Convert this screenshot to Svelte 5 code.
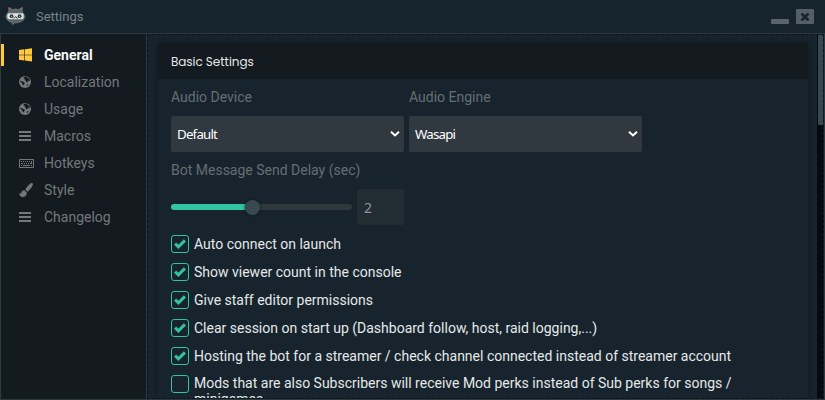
<script>
  const nav = [
    ['General', 'windows'],
    ['Localization', 'globe'],
    ['Usage', 'globe'],
    ['Macros', 'bars'],
    ['Hotkeys', 'keyboard'],
    ['Style', 'brush'],
    ['Changelog', 'bars']
  ];
  const options = [
    ['Auto connect on launch', true],
    ['Show viewer count in the console', true],
    ['Give staff editor permissions', true],
    ['Clear session on start up (Dashboard follow, host, raid logging,...)', true],
    ['Hosting the bot for a streamer / check channel connected instead of streamer account', true],
    ['Mods that are also Subscribers will receive Mod perks instead of Sub perks for songs / minigames', false]
  ];
</script>

{#snippet icon(name)}
  <svg class="icon" width="16" height="14" viewBox="0 0 16 14" fill="currentColor">
    {#if name === 'windows'}
      <path d="M0 2.1 5.4 1.3V6.7H0zM6 1.2 13 .2V6.7H6zM0 7.3H5.4V12.4L0 11.7zM6 7.3H13V13.5L6 12.5z" />
    {:else if name === 'globe'}
      <circle cx="6" cy="7" r="6" />
      <path class="land" d="M4.6 2.3 6.4 1.5 8.6 1.9 8.2 3.2 9.6 3 10.7 4.5 11 6 9.8 5.6 8.9 6.2 8.1 7.6 7 6.8 6.7 5.4 5.4 5 6.1 3.7 4.6 3.4zM1.3 5.8 3.1 6.5 5.2 7.2 5.9 8.2 5 9.3 4.6 10.6 3.5 9.5 3 8 1.4 7zM8 9.4 9.5 8.9 9 10.4 7.8 11.1z" />
    {:else if name === 'bars'}
      <path d="M0 2H12V4H0zM0 6H12V8H0zM0 10H12V12H0z" />
    {:else if name === 'keyboard'}
      <path fill-rule="evenodd" d="M1 3H14Q15 3 15 4V11Q15 12 14 12H1Q0 12 0 11V4Q0 3 1 3zM1 4V11H14V4z" />
      <path d="M2 5h1v1H2zM4 5h1v1H4zM6 5h1v1H6zM8 5h1v1H8zM10 5h1v1h-1zM12 5h1v3h-2V7h1zM2 7h2v1H2zM5 7h1v1H5zM7 7h1v1H7zM9 7h1v1H9zM2 9h1v1H2zM4 9h7v1H4zM12 9h1v1h-1z" />
    {:else}
      <path d="M12.6 0C13.5 0 14.2.7 13.9 1.6 13.2 4 10.7 7.3 8.5 8.7L6.2 6.6C7.4 4.3 10.8.5 12.6 0zM5.4 7.3 7.8 9.5C8 12.5 5.8 14 3.6 14 1.2 14 .2 12.3 0 10 .8 10.6 1.6 11 2.1 10.3 2.6 8.6 3.6 7.3 5.4 7.3z" />
    {/if}
  </svg>
{/snippet}

{#snippet select(value)}
  <div class="select">
    <span>{value}</span>
    <svg width="10" height="6" viewBox="0 0 10 6" fill="none" stroke="#fff" stroke-width="2"><path d="M1 .8 5 4.5 9 .8" /></svg>
  </div>
{/snippet}

<div class="window">
  <header class="titlebar">
    <svg class="logo" width="22" height="20" viewBox="0 0 22 20">
      <path d="M3 6 3.6 1.2 7.5 3Q10.5 2.2 13.5 3L17.4 1.2 18 6Q19.5 7.5 20.5 10.5 19.6 14.5 16 16.3 13 17.6 9.5 17.4L7.3 19.2 6.3 16.9Q1.5 15.5.3 10.5 1.3 7.5 3 6z" fill="#59666b" />
      <path d="M3.8 1 3.6 3.4 6 2.4zM17.2 1 17.4 3.4 15 2.4z" fill="#df5960" />
      <path d="M3.8 7.2H17.2Q18.7 7.2 18.7 8.7V11.5Q18.7 13.3 16.8 13.3H4.2Q2.3 13.3 2.3 11.5V8.7Q2.3 7.2 3.8 7.2z" fill="#dfe4e4" />
      <circle cx="6.6" cy="10.2" r="1.9" fill="#263338" />
      <circle cx="14.6" cy="10.2" r="1.9" fill="#263338" />
      <path d="M6.1 9.7h1.1v1.1H6.1zM14.1 9.7h1.1v1.1h-1.1z" fill="#dfe4e4" />
      <path d="m8.8 12.6 1.8-2 1.8 2" fill="none" stroke="#263338" />
    </svg>
    <span class="title">Settings</span>
    <span class="minimize"></span>
    <span class="close"><svg width="10" height="8" viewBox="0 0 10 8" fill="none" stroke="#17262e" stroke-width="2.6"><path d="m1.5.5 7 7m0-7-7 7" /></svg></span>
  </header>
  <div class="body">
    <nav>
      {#each nav as [label, glyph], i}
        <div class="item" class:active={i === 0}>{@render icon(glyph)}<span>{label}</span></div>
      {/each}
    </nav>
    <main>
      <section>
        <h2>Basic Settings</h2>
        <div class="content">
          <div class="fields">
            <div class="field"><div class="label">Audio Device</div>{@render select('Default')}</div>
            <div class="field"><div class="label">Audio Engine</div>{@render select('Wasapi')}</div>
          </div>
          <div class="label delay">Bot Message Send Delay (sec)</div>
          <div class="slider-row">
            <div class="track"><div class="fill"></div><div class="thumb"></div></div>
            <div class="number">2</div>
          </div>
          {#each options as [label, checked]}
            <div class="option">
              <span class="box">
                {#if checked}<svg width="12" height="10" viewBox="0 0 12 10" fill="none" stroke="#31c3a2" stroke-width="3"><path d="m1.1 4.6 3.3 3.3 6.5-6.5" /></svg>{/if}
              </span>
              <span class="text" class:wrapped={label.length > 90}>{label}</span>
            </div>
          {/each}
        </div>
      </section>
      <div class="scrollbar"><div class="handle"></div></div>
    </main>
  </div>
</div>

<style>
  * { box-sizing: border-box; }
  .window {
    width: 825px; height: 400px; overflow: hidden;
    display: flex; flex-direction: column;
    background: #17242d; color: #e5e8e9;
    font: 14px/20px Roboto, sans-serif;
  }
  .titlebar {
    height: 34px; flex: none; display: flex; align-items: flex-start;
    background: #16252d; border-bottom: 1px solid #2b3940; color: #78838a;
    padding: 0 11px 0 5px;
  }
  .logo { margin-top: 6px; }
  .title { font-size: 13px; margin: 7px auto 0 9px; }
  .minimize { width: 18px; height: 5px; border-radius: 1px; background: #59656b; margin: 19px 7px 0 0; }
  .close {
    width: 18px; height: 15px; border-radius: 1px; background: #536066; margin-top: 9px;
    display: flex; align-items: center; justify-content: center;
  }
  .body { flex: 1; display: flex; min-height: 0; border: 1px solid #2b3940; border-top: 0; }
  nav { width: 146px; flex: none; background: #131a20; border-right: 1px solid #2b3940; padding-top: 7px; }
  .item { height: 27px; display: flex; align-items: center; color: #73787b; padding-left: 18px; }
  .item .icon { flex: none; margin-right: 9px; }
  .land { fill: #131a20; }
  .active { color: #f7f7f7; font-weight: 700; position: relative; }
  .active .icon { color: #ffc83d; }
  .active::before { content: ''; position: absolute; left: 0; top: 3px; width: 3px; height: 22px; background: #ffc83d; }
  main {
    flex: 1; display: flex; min-width: 0; overflow: hidden;
    border: 1px dashed #0d151a; padding-left: 10px;
  }
  section {
    width: 650px; height: 500px; margin-top: 8px; background: #17242d;
    box-shadow: 0 0 4px 1px #0b131880; border-radius: 2px;
  }
  h2 {
    margin: 0; height: 36px; background: #131a20; border-radius: 2px 2px 0 0;
    padding-left: 13px; font: 400 12px/38px Poppins, Inter, sans-serif; letter-spacing: -.05px;
  }
  .content { padding: 8px 13px 0; }
  .fields { display: flex; gap: 5px; }
  .field { width: 233px; }
  .label { height: 20px; color: #666e73; }
  .select {
    height: 36px; margin-top: 9px; border-radius: 2px; background: #30393f; color: #fff;
    display: flex; align-items: center; justify-content: space-between;
    padding: 0 4px 0 6px; font: 13.3px/18px "Noto Sans", sans-serif; letter-spacing: -.8px;
  }
  .delay { margin-top: 8px; }
  .slider-row { display: flex; align-items: center; margin-top: 9px; height: 36px; gap: 5px; }
  .track { width: 181px; height: 6px; border-radius: 3px; background: #2f383d; display: flex; align-items: center; }
  .fill { width: 75px; height: 6px; border-radius: 3px 0 0 3px; background: #31c3a2; }
  .thumb { width: 15px; height: 15px; border-radius: 50%; background: #3a4950; box-shadow: 0 0 3px #0e161b; margin-left: -1px; }
  .number {
    width: 47px; height: 36px; border-radius: 2px; background: #212c33; color: #8b9398;
    padding-left: 7px; font: 14px/37px "Noto Sans", sans-serif;
  }
  .option { display: flex; align-items: flex-start; margin-bottom: 8px; }
  .slider-row + .option { margin-top: 9px; }
  .box {
    width: 18px; height: 18px; margin: 1px 5px 0 0; flex: none;
    border: 1px solid #31c3a2; border-radius: 3px;
    display: flex; align-items: center; justify-content: center;
  }
  .text { width: 560px; line-height: 17px; padding-top: 2px; margin-bottom: 1px; }
  .wrapped { line-height: 16px; padding-top: 1px; }
  .scrollbar { width: 6px; margin-left: auto; background: #040c11; }
  .handle { height: 90px; width: 5px; margin-left: .5px; background: #374850; border-radius: 1px; }
</style>
